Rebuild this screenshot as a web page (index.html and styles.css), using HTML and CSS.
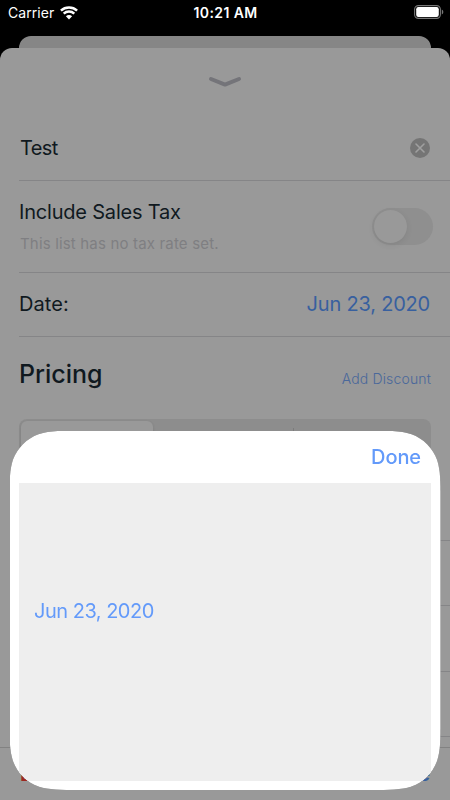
FILE: index.html
```html
<!DOCTYPE html>
<html lang="en">
<head>
<meta charset="utf-8">
<title>Edit item</title>
<link rel="stylesheet" href="styles.css">
</head>
<body>
<div class="screen">
  <header class="status">
    <div class="carrier"><span class="carrier-name">Carrier</span>
      <svg class="wifi" width="18" height="14" viewBox="0 0 18 14" fill="none" stroke="#fff" stroke-width="2.5"><path d="M.9 4.6C5.4.5 12.6.5 17.1 4.6M3.7 7.7c3-2.8 7.6-2.8 10.6 0"/><path d="M9 13.4 5.9 10.3c1.8-1.6 4.4-1.6 6.2 0Z" fill="#fff" stroke="none"/></svg>
    </div>
    <span class="time">10:21 AM</span>
    <svg class="battery" width="30" height="14" viewBox="0 0 30 14"><rect x=".6" y=".6" width="25.8" height="12.8" rx="3.8" fill="none" stroke="#777" stroke-width="1.1"/><rect x="2.2" y="2" width="22.6" height="10" rx="2.2" fill="#fff"/><path d="M27.8 4.6c2 .9 2 4 0 4.9Z" fill="#777"/></svg>
  </header>
  <div class="back-card"></div>
  <main class="sheet">
    <div class="grabber"><svg width="34" height="12" viewBox="0 0 34 12" fill="none" stroke="#747479" stroke-width="4" stroke-linecap="round" stroke-linejoin="round"><path d="M3 3 17 8.6 31 3"/></svg></div>
    <div class="row name-row"><span class="label name">Test</span>
      <svg width="20" height="20" viewBox="0 0 20 20"><circle cx="10" cy="10" r="10" fill="#757575"/><path d="m6 6 8 8m0-8-8 8" stroke="#a0a0a0" stroke-width="1.6" stroke-linecap="round"/></svg>
    </div>
    <div class="row tax-row">
      <div class="tax"><span class="label include">Include Sales Tax</span><span class="hint">This list has no tax rate set.</span></div>
      <div class="switch"><div class="knob"></div></div>
    </div>
    <div class="row date-row"><span class="label date-label">Date:</span><span class="date">Jun 23, 2020</span></div>
    <div class="pricing-head"><h2>Pricing</h2><span class="discount">Add Discount</span></div>
    <div class="segments"><div class="segment active"></div><div class="segment"></div><div class="segment last"></div></div>
    <div class="fields"><div class="field first"></div><div class="field"></div><div class="field"></div><div class="field"></div></div>
    <footer class="toolbar"><span class="delete">Delete</span><span class="save">Close</span></footer>
  </main>
  <section class="picker-shadow">
    <div class="picker">
      <div class="picker-head"><span class="done">Done</span></div>
      <div class="picker-body"><span class="picked">Jun 23, 2020</span></div>
    </div>
  </section>
</div>
</body>
</html>
```
FILE: styles.css
```css
* { box-sizing: border-box; }
body { margin: 0; background: #000; font-family: Inter, "Liberation Sans", sans-serif; }
.screen { position: relative; width: 450px; height: 800px; overflow: hidden; display: flex; flex-direction: column; white-space: nowrap; }
.status { height: 36px; flex: none; display: grid; grid-template-columns: 1fr auto 1fr; padding: 5px 6px 0 8px; color: #fff; align-items: start; }
.carrier { display: flex; align-items: center; gap: 6px; height: 15px; }
.carrier-name { font-size: 14px; letter-spacing: .05px; }
.time { font-size: 14px; line-height: 15px; font-weight: 600; letter-spacing: .4px; position: relative; left: -.5px; }
.battery { justify-self: end; }
.back-card { flex: none; height: 12px; margin: 0 19px; border-radius: 12px 12px 0 0; background: #868686; }
.sheet { flex: 1; background: #999; border-radius: 12px 12px 0 0; display: flex; flex-direction: column; color: #10191f; }
.grabber { height: 67px; padding-top: 28px; display: flex; justify-content: center; flex: none; }
.row { margin-left: 19px; padding-right: 20px; border-bottom: 1px solid #858587; display: flex; align-items: center; justify-content: space-between; flex: none; }
.label { font-size: 20px; line-height: 24px; }
.name { letter-spacing: -.6px; padding-left: 1px; }
.include { letter-spacing: -.2px; }
.date-label { letter-spacing: .1px; }
.name-row { height: 66px; }
.tax-row { height: 92px; padding-right: 17px; }
.tax { display: flex; flex-direction: column; gap: 10px; }
.hint { font-size: 15px; line-height: 20px; color: #7f7f82; letter-spacing: .17px; padding-left: 1px; }
.switch { width: 61px; height: 37px; padding: 2px; border-radius: 19px; background: #8f8f8f; }
.knob { width: 33px; height: 33px; border-radius: 50%; background: #999; box-shadow: 0 2px 6px rgba(0,0,0,.08); }
.date-row { height: 64px; padding-bottom: 1px; }
.date { font-size: 20px; letter-spacing: -.2px; color: #38609f; }
.pricing-head { height: 82px; flex: none; padding: 21px 19px 0 19px; display: flex; justify-content: space-between; }
h2 { margin: 0; font-size: 25px; line-height: 32px; font-weight: 500; letter-spacing: 0; }
.discount { font-size: 14px; line-height: 18px; margin-top: 12px; font-weight: 350; letter-spacing: .15px; color: #4a689b; }
.segments { height: 38px; flex: none; margin: 0 19px; padding: 2px; border-radius: 8px; background: #8d8d8d; display: grid; grid-template-columns: 132px 140px 1fr; }
.segment.active { border-radius: 6px; background: #999; box-shadow: 0 1px 3px rgba(0,0,0,.12); }
.segment.last { border-left: 1px solid #7c7c7c; margin: 7px 0; }
.fields { flex: none; margin-left: 19px; height: 290px; }
.field { height: 65.3px; border-bottom: 1px solid #858587; }
.field.first { height: 84px; }
.toolbar { flex: none; height: 53px; border-top: 1px solid #828282; padding: 14px 20px 0; display: flex; justify-content: space-between; font-size: 20px; line-height: 24px; font-weight: 600; }
.delete { color: #9c2722; }
.save { color: #38609f; }
.picker-shadow { position: absolute; left: 9.5px; top: 430.7px; filter: drop-shadow(0 0 .6px rgba(0,0,0,.5)); }
.picker { width: 431px; height: 359.3px; padding: 0 9.5px 9px; background: #fff; display: flex; flex-direction: column;
  clip-path: path("M70.3 0H360.7C380.9 0 391.1 0 402 3.45C413.85 7.78 423.22 17.15 427.55 29C431 39.9 431 50.1 431 70.3V289C431 309.2 431 319.4 427.55 330.3C423.22 342.15 413.85 351.52 402 355.85C391.1 359.3 380.9 359.3 360.7 359.3H70.3C50.1 359.3 39.9 359.3 29 355.85C17.15 351.52 7.78 342.15 3.45 330.3C0 319.4 0 309.2 0 289V70.3C0 50.1 0 39.9 3.45 29C7.78 17.15 17.15 7.78 29 3.45C39.9 0 50.1 0 70.3 0Z"); }
.picker-head { height: 52.7px; flex: none; display: flex; justify-content: flex-end; align-items: center; padding: 0 10px; }
.done { font-size: 20px; font-weight: 500; letter-spacing: -.1px; color: #639afa; }
.picker-body { flex: 1; background: #eee; padding: 116px 15px 0; }
.picked { font-size: 20px; line-height: 24px; letter-spacing: -.5px; color: #639afa; }
```
